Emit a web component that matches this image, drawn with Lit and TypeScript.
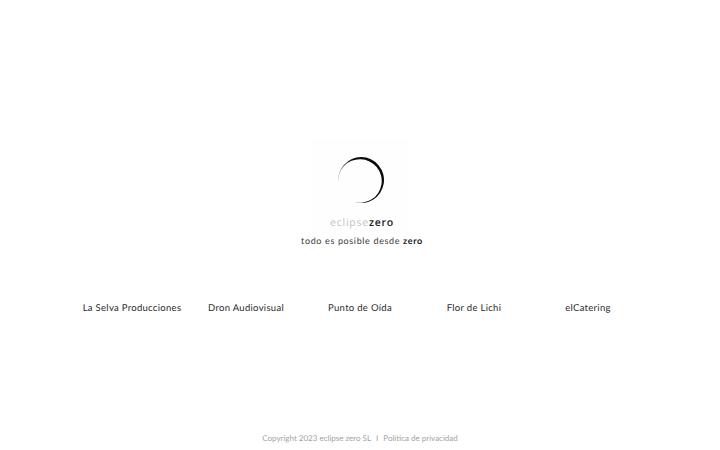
import { LitElement, html, css } from "lit";
import { customElement } from "lit/decorators.js";

@customElement("app-root")
export class AppRoot extends LitElement {
  static styles = css`
    :host { display: block; }
    .page {
      height: 450px; box-sizing: border-box; background: #fff;
      display: flex; flex-direction: column; align-items: center;
      font-family: Lato, "Liberation Sans", sans-serif; overflow: hidden;
      padding-top: 139px; text-rendering: geometricPrecision;
    }
    .logo {
      width: 100px; height: 92px; background: #fefefe;
      display: flex; flex-direction: column; align-items: center;
    }
    .ring { display: block; width: 100px; height: 76px; flex: none; filter: blur(0.35px); }
    .word {
      font-family: "Open Sans", sans-serif; font-size: 10.5px; line-height: 14px;
      color: #c2c2c2; letter-spacing: 0.75px; padding-left: 4px; margin-top: 1px;
    }
    .word b { color: #222; font-weight: 600; }
    .tag {
      margin-top: 3px; padding-left: 4px; font-size: 9px; line-height: 14px; letter-spacing: 0.64px; color: #3a3a3a;
    }
    .tag b { color: #222; font-weight: 700; }
    .links {
      width: 570px; margin-top: 54px;
      display: grid; grid-template-columns: repeat(5, 1fr);
      font-size: 9.5px; line-height: 14px; letter-spacing: 0.3px; color: #2b2b2b; text-align: center;
    }
    .foot {
      margin-top: auto; padding-bottom: 5px; font-size: 8px; line-height: 14px; color: #a3a3a3;
      display: flex; gap: 5px;
    }
  `;

  render() {
    return html`<div class="page">
      <div class="logo">
        <svg class="ring" viewBox="0 0 100 76" aria-hidden="true">
          <defs>
            <linearGradient id="fade" gradientUnits="userSpaceOnUse" x1="28" y1="0" x2="42" y2="0">
              <stop offset="0" stop-color="#aaa"></stop>
              <stop offset="1" stop-color="#0c0c0c"></stop>
            </linearGradient>
          </defs>
          <path fill="url(#fade)" d="M28.2 44 A23 23 0 1 1 44 63 A21.8 21.8 0 1 0 28.2 44 Z"></path>
        </svg>
        <div class="word">eclipse<b>zero</b></div>
      </div>
      <div class="tag">todo es posible desde <b>zero</b></div>
      <div class="links">
        <span>La Selva Producciones</span>
        <span>Dron Audiovisual</span>
        <span>Punto de Oída</span>
        <span>Flor de Lichi</span>
        <span>elCatering</span>
      </div>
      <div class="foot"><span>Copyright 2023 eclipse zero SL</span><span>I</span><span>Política de privacidad</span></div>
    </div>`;
  }
}
